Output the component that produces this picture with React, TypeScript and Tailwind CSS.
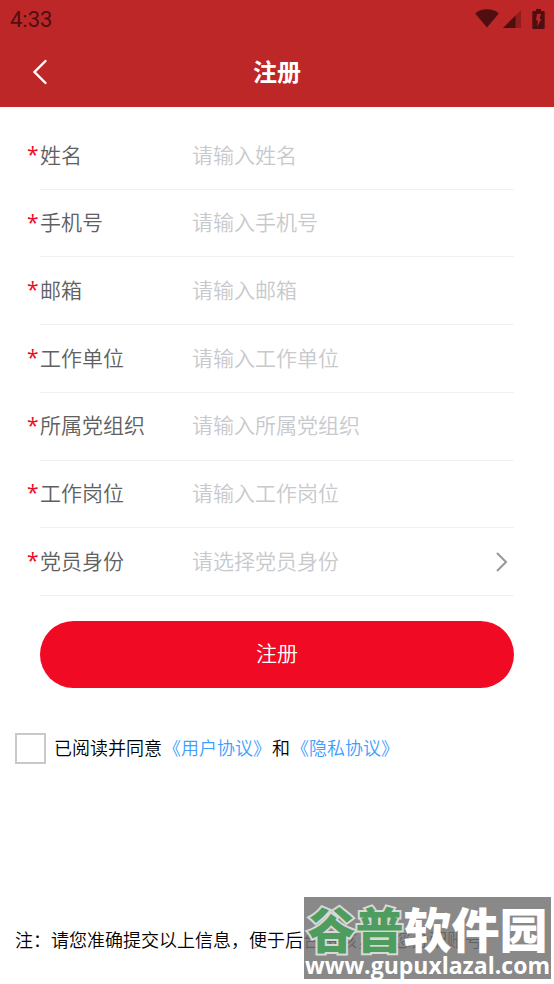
import React, { useState } from "react";

const fields = [
  { id: "name", label: "姓名", placeholder: "请输入姓名", type: "text" },
  { id: "phone", label: "手机号", placeholder: "请输入手机号", type: "tel" },
  { id: "email", label: "邮箱", placeholder: "请输入邮箱", type: "email" },
  { id: "company", label: "工作单位", placeholder: "请输入工作单位", type: "text" },
  { id: "branch", label: "所属党组织", placeholder: "请输入所属党组织", type: "text" },
  { id: "post", label: "工作岗位", placeholder: "请输入工作岗位", type: "text" },
];

const identities = ["中共党员", "预备党员", "入党积极分子"];

const StatusBar = () => {
  return (
    <div className="flex h-[37px] items-center justify-between pl-[10px] pr-[9px] text-[#4f0f10]">
      <span className="pt-[2px] font-[Roboto] text-[22px] leading-none">4:33</span>
      <div className="flex items-center">
        <svg width="24" height="19" viewBox="0 0 24 19" fill="currentColor" aria-hidden="true">
          <path d="M12 18.4 0.2 4.4C3.2 1.6 7.4 0.2 12 0.2s8.800 1.400 11.800 4.200z" />
        </svg>
        <svg
          className="ml-[4px]"
          width="18"
          height="19"
          viewBox="0 0 18 19"
          fill="currentColor"
          aria-hidden="true"
        >
          <path d="M0 19 18 1v18z" opacity="0.4" />
          <path d="M0 19 12.500 6.500V19z" />
        </svg>
        <svg
          className="ml-[11px]"
          width="13"
          height="20"
          viewBox="0 0 13 20"
          fill="currentColor"
          aria-hidden="true"
        >
          <path
            fillRule="evenodd"
            d="M4 0h5v2h2.500A1.200 1.200 0 0 1 12.700 3.200v15.600A1.200 1.200 0 0 1 11.500 20h-10A1.200 1.200 0 0 1 .3 18.800V3.200A1.200 1.200 0 0 1 1.500 2H4zM5 5 4 11.500h2l-1 6L9.500 10h-2L9 5z"
          />
        </svg>
      </div>
    </div>
  );
};

const FieldLabel = ({ id, text }: { id: string; text: string }) => {
  return (
    <label htmlFor={id} className="flex w-[165px] shrink-0 items-center text-[#606060]">
      <span className="w-[13px] font-['Open_Sans'] leading-none font-medium text-[#ee0a24]">*</span>
      {text}
    </label>
  );
};

const Watermark = () => {
  return (
    <div className="pointer-events-none absolute right-[3px] bottom-[5px] flex h-[82px] w-[247px] flex-col items-center bg-[#747474]/85 whitespace-nowrap text-white">
      <span className="text-[48px] leading-[60px] font-black">
        <span className="text-[#4f9c5f] [-webkit-text-stroke:4px_#d8d8d8] [paint-order:stroke_fill]">
          谷普
        </span>
        软件园
      </span>
      <span className="font-['Open_Sans'] text-[23px] leading-[16px] font-bold">
        www.gupuxlazal.com
      </span>
    </div>
  );
};

const App = () => {
  const [identity, setIdentity] = useState("");

  return (
    <div className="relative flex min-h-screen flex-col bg-white font-['Noto_Sans_CJK_SC',sans-serif]">
      <header className="bg-[#be2727] text-white">
        <StatusBar />
        <div className="grid h-[70px] grid-cols-[80px_1fr_80px] items-center">
          <button type="button" aria-label="返回" className="flex h-full items-center justify-center">
            <svg
              width="16"
              height="26"
              viewBox="0 0 16 26"
              fill="none"
              stroke="currentColor"
              strokeWidth="2.4"
              strokeLinecap="round"
            >
              <path d="M13.500 2 2.500 13l11 11" />
            </svg>
          </button>
          <h1 className="pb-[3px] text-center text-[24px] leading-none font-bold">注册</h1>
        </div>
      </header>

      <form
        className="flex flex-1 flex-col pt-[15px]"
        onSubmit={(e) => e.preventDefault()}
      >
        <div className="mx-[40px] grid min-h-[474px] auto-rows-fr text-[21px] font-[350]">
          {fields.map((field) => (
            <div key={field.id} className="flex border-b border-[#f0f0f2]">
              <div className="-ml-[13px] flex flex-1 pb-[2px]">
                <FieldLabel id={field.id} text={field.label} />
                <input
                  id={field.id}
                  type={field.type}
                  placeholder={field.placeholder}
                  className="w-full min-w-0 flex-1 outline-none placeholder:text-[#c8c9cc]"
                />
              </div>
            </div>
          ))}
          <div className="flex border-b border-[#f0f0f2]">
            <div className="relative -ml-[13px] flex flex-1 pb-[2px]">
              <FieldLabel id="identity" text="党员身份" />
              <select
                id="identity"
                value={identity}
                onChange={(e) => setIdentity(e.target.value)}
                className={`w-full min-w-0 flex-1 appearance-none outline-none ${
                  identity ? "text-black" : "text-[#c8c9cc]"
                }`}
              >
                <option value="" disabled>
                  请选择党员身份
                </option>
                {identities.map((item) => (
                  <option key={item} value={item}>
                    {item}
                  </option>
                ))}
              </select>
              <svg
                className="pointer-events-none absolute top-1/2 right-[5px] -translate-y-1/2"
                width="14"
                height="20"
                viewBox="0 0 14 20"
                fill="none"
                stroke="#969799"
                strokeWidth="2"
                aria-hidden="true"
              >
                <path d="M2 1l9 9-9 9" />
              </svg>
            </div>
          </div>
        </div>

        <button
          type="submit"
          className="mx-[40px] mt-[25px] h-[67px] rounded-full bg-[#f00a24] pb-[3px] text-[21px] font-[350] text-white"
        >
          注册
        </button>

        <div className="mt-[45px] flex items-center px-[15px] text-[18px] leading-[28px] font-[350] text-black">
          <input
            id="agree"
            type="checkbox"
            className="mr-[8px] size-[31px] shrink-0 appearance-none border-2 border-[#c8c9cc] bg-white checked:bg-[#f00a24]"
          />
          <p className="pb-[3px]">
            <label htmlFor="agree">已阅读并同意</label>
            <a href="#terms" className="mx-[1px] text-[#409eff]">
              《用户协议》
            </a>
            和
            <a href="#privacy" className="mx-[1px] text-[#409eff]">
              《隐私协议》
            </a>
          </p>
        </div>

        <p className="mt-auto px-[15px] pb-[31px] text-[18px] leading-[28px] font-[350] text-black">
          注：请您准确提交以上信息，便于后台审核，为您分配账号
        </p>
      </form>

      <Watermark />
    </div>
  );
};

export default App;
